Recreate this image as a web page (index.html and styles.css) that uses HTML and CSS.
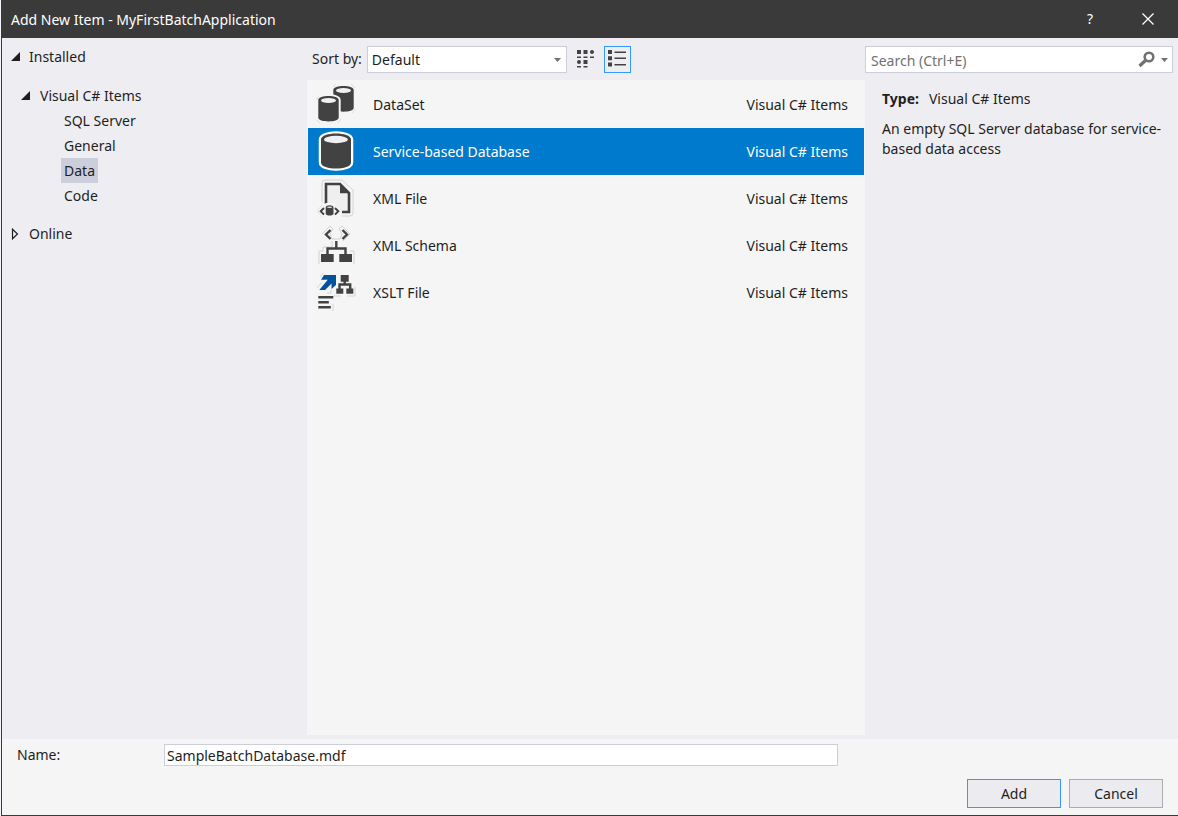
FILE: index.html
```
<!DOCTYPE html>
<html lang="en">
<head>
<meta charset="utf-8">
<title>Add New Item - MyFirstBatchApplication</title>
<link rel="stylesheet" href="styles.css">
</head>
<body>
<main class="dialog">
  <header class="titlebar">
    <h1 class="title">Add New Item - MyFirstBatchApplication</h1>
    <button class="caption-button" type="button" aria-label="Help">?</button>
    <button class="caption-button" type="button" aria-label="Close">
      <svg width="12" height="12" viewBox="0 0 12 12"><path d="M0.5 0.5 11.5 11.5M11.5 0.5 0.5 11.5" fill="none" stroke="#fff" stroke-width="1.3"/></svg>
    </button>
  </header>

  <div class="content">
    <nav class="sidebar" aria-label="Templates">
      <ul class="tree">
        <li>
          <button class="node root" type="button" aria-expanded="true"><svg class="arrow" width="10" height="10" viewBox="0 0 10 10"><path d="M9 0v9H0z" fill="#1e1e1e"/></svg>Installed</button>
          <ul class="tree group">
            <li>
              <button class="node branch" type="button" aria-expanded="true"><svg class="arrow" width="10" height="10" viewBox="0 0 10 10"><path d="M9 0v9H0z" fill="#1e1e1e"/></svg>Visual C# Items</button>
              <ul class="tree leaves">
                <li><button class="node leaf" type="button">SQL Server</button></li>
                <li><button class="node leaf" type="button">General</button></li>
                <li><button class="node leaf current" type="button" aria-current="true">Data</button></li>
                <li><button class="node leaf" type="button">Code</button></li>
              </ul>
            </li>
          </ul>
        </li>
        <li><button class="node root" type="button" aria-expanded="false"><svg class="arrow" width="10" height="12" viewBox="0 0 10 12"><path d="M1.5 1.2v9.6L6.5 6z" fill="none" stroke="#1e1e1e" stroke-width="1.2"/></svg>Online</button></li>
      </ul>
    </nav>

    <section class="templates">
      <div class="toolbar">
        <label for="sort">Sort by:</label>
        <span class="select-wrap">
          <select id="sort" class="field sort"><option>Default</option></select>
          <svg class="select-arrow" width="7" height="4" viewBox="0 0 7 4"><path d="M0 0h7L3.5 4z" fill="#717171"/></svg>
        </span>
        <button class="view-button" type="button" aria-label="Small icons">
          <svg width="18" height="18" viewBox="-1 0 18 18" fill="#424242"><path d="M0 0h4v4H0zM6.500 0h4v4h-4zM0 6.500h4V8H0zM6.500 6.500h4V8h-4zM13 6.500h4V8h-4zM6.500 10h4v4h-4zM0 16h4v1.500H0zM6.500 16h4v1.500h-4z"/><circle cx="15" cy="2" r="2"/><circle cx="2" cy="12" r="2"/></svg>
        </button>
        <button class="view-button pressed" type="button" aria-label="List" aria-pressed="true">
          <svg width="18" height="18" viewBox="0 0 18 18" fill="#424242"><path d="M0 0h4v4H0zM0 6.300h4v4H0zM0 12.600h4v4H0zM6.500 1.500H18V3H6.500zM6.500 7.600H18v1.500H6.500zM6.500 14H18v1.500H6.500z"/></svg>
        </button>
      </div>
      <ul class="items">
        <li><button class="item" type="button">
          <svg width="40" height="47" viewBox="0 0 40 47">
            <g fill="#424242"><path d="M17.300 9c0-5.300 20.400-5.300 20.400 0v18c0 4.900-20.400 4.900-20.400 0z"/><ellipse cx="27.500" cy="9.500" rx="7.500" ry="2.500" fill="#f1f1f3"/><path d="M2.300 19c0-5.300 20.400-5.300 20.400 0v17.700c0 4.900-20.400 4.900-20.400 0z" stroke="#f5f5f5" stroke-width="4" paint-order="stroke"/><ellipse cx="12.500" cy="19.400" rx="7.500" ry="2.500" fill="#f1f1f3"/></g>
            <path d="M1 19v-2l2-2M1 39l3 3M22 42l3-4M17 6l3-3M35 3l4 4M39 28l-3 4" fill="none" stroke="#dcdcdc"/>
          </svg><span class="name">DataSet</span><span>Visual C# Items</span></button></li>
        <li><button class="item selected" type="button" aria-current="true">
          <svg width="40" height="47" viewBox="0 0 40 47"><path d="M5 11.500C5 3.500 35 3.500 35 11.500v23C35 42.500 5 42.500 5 34.500z" fill="#424242" stroke="#fff" stroke-width="4.500" paint-order="stroke" stroke-linejoin="round"/><ellipse cx="20" cy="11.500" rx="12" ry="3.700" fill="#f1f1f3"/></svg><span class="name">Service-based Database</span><span>Visual C# Items</span></button></li>
        <li><button class="item" type="button">
          <svg width="40" height="47" viewBox="0 0 40 47">
            <path d="M6 27V8q0-3 3-3h17l11 10v23q0 3-3 3h-8" fill="none" stroke="#d5d5d5"/>
            <path d="M10 29V9h14l9 9v19h-7" fill="#efeff0" stroke="#424242" stroke-width="2.600"/><path d="M24 7.700v10.500h10z" fill="#424242"/>
            <path d="M1 36l6-6 3-2h8l7 8-6 6H7z" fill="#f5f5f5"/><path d="M6 30l-5 6 5 6" fill="none" stroke="#ddd" stroke-width=".8"/>
            <path d="M8 33l-3.300 3.300L8 39.600M19 33l3.300 3.300L19 39.600" fill="none" stroke="#424242" stroke-width="2"/>
            <path d="M9.700 32.500c0-3 7.800-3 7.800 0v6c0 2.800-7.800 2.800-7.800 0z" fill="#424242"/><ellipse cx="13.600" cy="32.300" rx="2.600" ry=".8" fill="#ddd"/>
          </svg><span class="name">XML File</span><span>Visual C# Items</span></button></li>
        <li><button class="item" type="button">
          <svg width="40" height="47" viewBox="0 0 40 47">
            <path d="M6 12l8-8 3 3-3 5 2 5h8l2-5-3-5 3-3 8 8-7 7M3 42V29h4v-4h9v-6M38 42V29h-4" fill="none" stroke="#d2d2d2"/>
            <path d="M14.500 8l-4.500 4.500 4.500 4.500M26.500 8l4.500 4.500-4.500 4.500" fill="none" stroke="#424242" stroke-width="2.400"/>
            <path d="M20.300 19v7M11.500 32v-5.500h18V32" fill="none" stroke="#424242" stroke-width="2.400"/>
            <path d="M5 32h12.700v8H5zM23.300 32H36v8H23.300z" fill="#424242"/>
          </svg><span class="name">XML Schema</span><span>Visual C# Items</span></button></li>
        <li><button class="item" type="button">
          <svg width="40" height="47" viewBox="0 0 40 47">
            <path d="M4 8l3-4M1 19l4-5M39 18v9h-8M18 27h7M17 35v7M11 24h4v-3" fill="none" stroke="#d5d5d5"/>
            <path d="M8 6h12v10l-4.500 4V14.500L9 21H3.300l8.500-10.300H5z" fill="#00539c"/>
            <path d="M24.700 6h8v6.700h-8zM20.300 19.500h7v5.200h-7zM30.300 19.500h7v5.200h-7zM2.300 27h15v2.400h-15zM2.300 32h10.500v2.400H2.300zM2.300 37h12.500v2.400H2.300z" fill="#424242"/>
            <path d="M28.700 12v3.500M23.500 20v-4.500h10.700V20" fill="none" stroke="#424242" stroke-width="2.400"/>
          </svg><span class="name">XSLT File</span><span>Visual C# Items</span></button></li>
      </ul>
    </section>

    <aside class="details">
      <div class="search field">
        <input class="search-input" type="search" aria-label="Search" placeholder="Search (Ctrl+E)">
        <button class="search-button" type="button" aria-label="Search"><svg width="17" height="17" viewBox="0 0 17 17"><circle cx="11" cy="6" r="4.300" fill="none" stroke="#717171" stroke-width="2.600"/><path d="M8 9l-6.500 6" stroke="#717171" stroke-width="3.200"/></svg></button>
        <button class="search-button" type="button" aria-label="Search options"><svg width="7" height="4" viewBox="0 0 7 4"><path d="M0 0h7L3.500 4z" fill="#717171"/></svg></button>
      </div>
      <div class="description">
        <p class="type"><strong>Type:</strong><span>Visual C# Items</span></p>
        <p class="summary">An empty SQL Server database for service-based data access</p>
      </div>
    </aside>
  </div>

  <form class="footer">
    <div class="name-row">
      <label class="name-label" for="name">Name:</label>
      <input id="name" class="field name-input" type="text" value="SampleBatchDatabase.mdf">
    </div>
    <div class="actions">
      <button class="action primary" type="button">Add</button>
      <button class="action" type="button">Cancel</button>
    </div>
  </form>
</main>
</body>
</html>
```
FILE: styles.css
```
* {
  box-sizing: border-box;
}

body {
  margin: 0;
  padding-left: 1px;
  background: #f4f4fb;
  color: #1e1e1e;
  font: 14px/20px "Noto Sans", "Open Sans", sans-serif;
}

button,
input,
select {
  margin: 0;
  padding: 0;
  border: 0;
  border-radius: 0;
  background: none;
  color: inherit;
  font: inherit;
}

ul,
p,
h1 {
  margin: 0;
  padding: 0;
  list-style: none;
}

svg {
  display: block;
  flex: none;
}

.dialog {
  display: flex;
  flex-direction: column;
  min-height: 100vh;
  border-left: 1px solid #3a3a3a;
  border-bottom: 1px solid #3a3a3a;
  background: #eeeef2;
}

.titlebar {
  display: flex;
  height: 38px;
  padding: 0 1px 0 9px;
  background: #3a3a3a;
  color: #fff;
}

.title {
  flex: 1;
  font-size: 14px;
  font-weight: 400;
  line-height: 40px;
}

.caption-button {
  display: flex;
  align-items: center;
  justify-content: center;
  width: 58px;
}

.content {
  display: grid;
  grid-template-columns: 305px 1fr 313px;
  flex: 1;
}

.sidebar {
  padding-top: 6px;
}

.group {
  padding: 14px 0 13px;
}

.node {
  display: flex;
  align-items: center;
  height: 25px;
  white-space: nowrap;
}

.root {
  gap: 8px;
  padding-left: 9px;
}

.branch {
  gap: 9px;
  padding-left: 19px;
}

.leaves {
  padding-left: 59px;
}

.leaf {
  padding: 0 3px;
}

.current {
  background: #cccedb;
}

.templates {
  display: flex;
  flex-direction: column;
  padding-bottom: 4px;
}

.toolbar {
  display: flex;
  align-items: center;
  gap: 5px;
  height: 42px;
  padding-left: 5px;
}

.field {
  border: 1px solid #cccedb;
  background: #fff;
}

.select-wrap {
  position: relative;
}

.sort {
  display: block;
  width: 200px;
  height: 27px;
  padding: 1px 4px 0;
  appearance: none;
}

.select-arrow {
  position: absolute;
  top: 12px;
  right: 6px;
  pointer-events: none;
}

.view-button {
  display: flex;
  align-items: center;
  justify-content: center;
  width: 27px;
  height: 27px;
}

.pressed {
  border: 1px solid #3399ff;
}

.items {
  flex: 1;
  padding: 1px 1px 0;
  background: #f5f5f5;
}

.item {
  display: flex;
  align-items: center;
  width: 100%;
  height: 47px;
  padding: 0 16px 0 8px;
}

.name {
  flex: 1;
  padding-left: 17px;
  text-align: left;
}

.selected {
  background: #007acc;
  color: #fff;
}

.search {
  display: flex;
  align-items: center;
  height: 27px;
  margin: 8px 5px 0 0;
}

.search-input {
  flex: 1;
  min-width: 0;
  padding: 2px 0 0 5px;
  outline: none;
}

.search-input::placeholder {
  color: #717171;
  opacity: 1;
}

.search-button {
  padding-right: 4px;
}

.search-button + .search-button {
  padding-left: 2px;
}

.description {
  padding: 16px 12px 0 17px;
}

.type {
  display: flex;
  gap: 10px;
  padding-bottom: 10px;
}

.footer {
  padding: 5px 15px 7px;
  background: #f5f5f5;
}

.name-row {
  display: flex;
  align-items: center;
}

.name-label {
  width: 147px;
}

.name-input {
  flex: 1;
  height: 22px;
  margin-right: 325px;
  padding: 0 2px;
}

.actions {
  display: flex;
  justify-content: flex-end;
  gap: 8px;
  padding-top: 13px;
}

.action {
  width: 94px;
  height: 29px;
  padding-top: 1px;
  border: 1px solid #acacac;
  background: #ececf0;
}

.primary {
  border-color: #3399ff;
}
```
